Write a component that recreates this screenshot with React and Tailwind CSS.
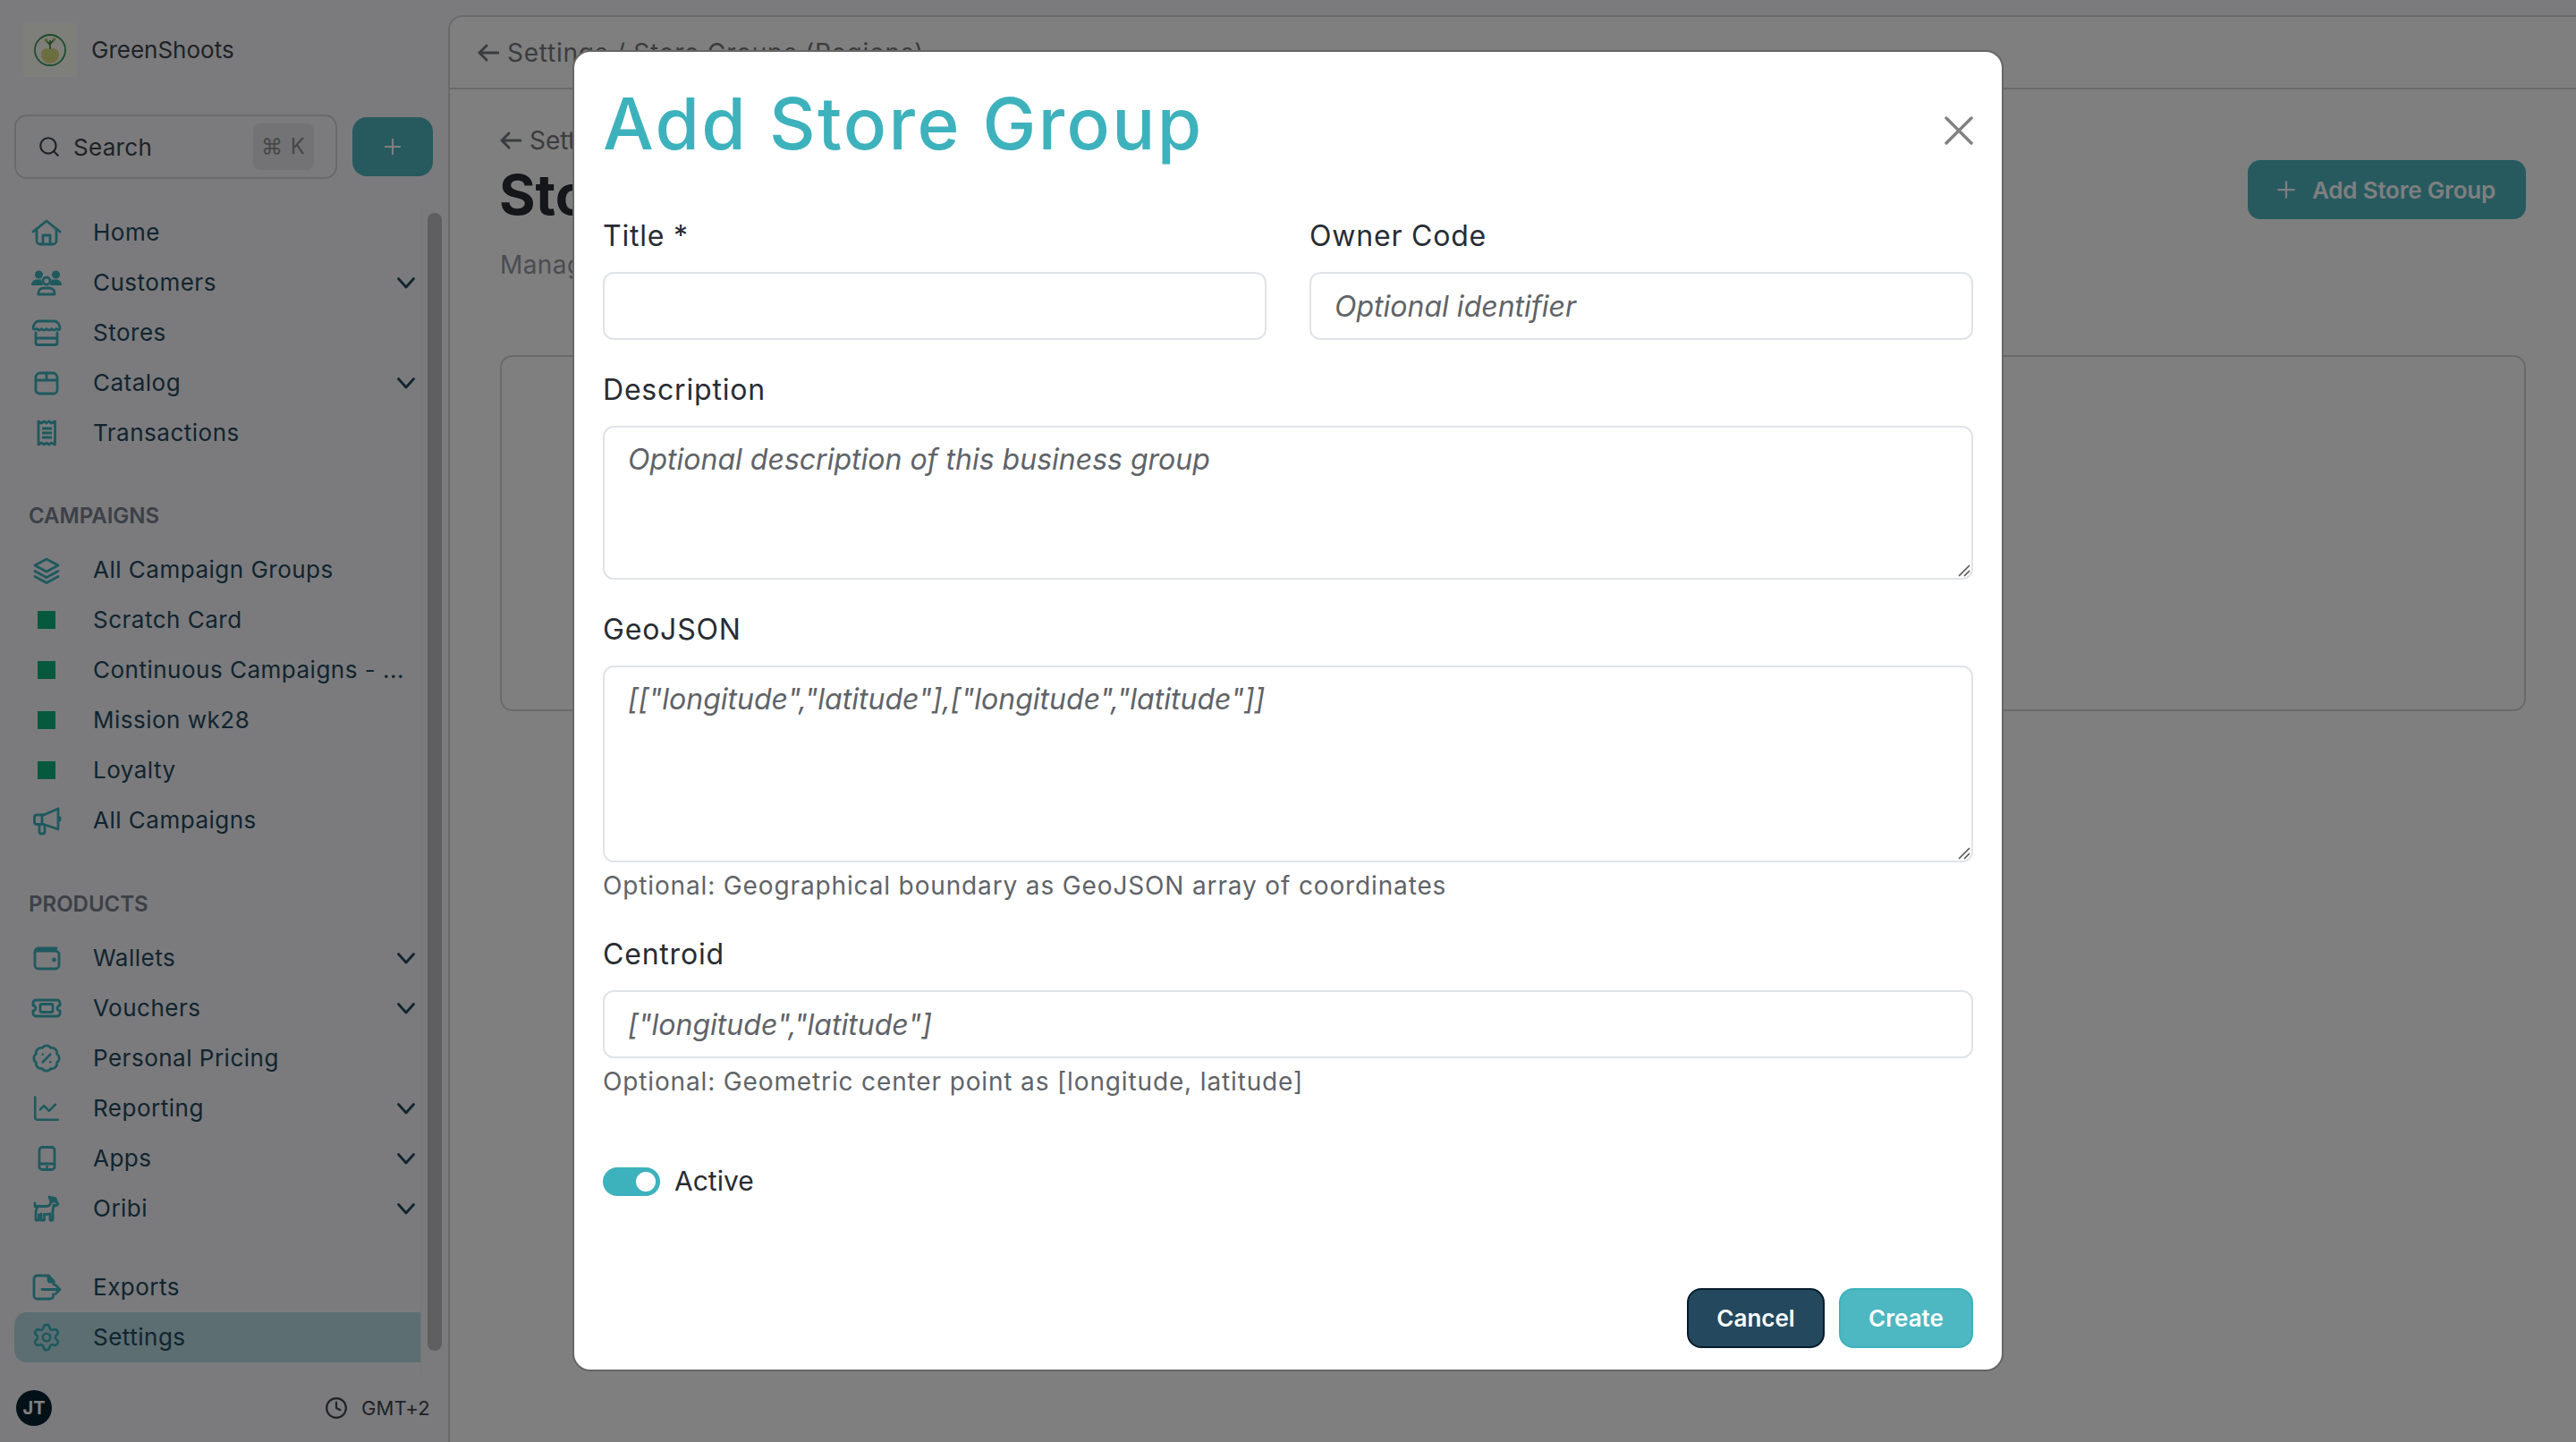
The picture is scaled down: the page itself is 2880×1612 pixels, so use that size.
import React from 'react'
import { BadgePercent, ChartLine, Clock, Search, Settings, Plus } from 'lucide-react'

const icon = 'h-[36px] w-[36px] shrink-0 fill-none stroke-[#3db2bd] stroke-[2.8]'

const HomeIcon = () => (
  <svg viewBox="0 0 36 36" className={icon} strokeLinecap="round" strokeLinejoin="round">
    <path d="M3 17 18 5l15 12" />
    <path d="M7 14v13a4 4 0 0 0 4 4h14a4 4 0 0 0 4-4V14" />
    <path d="M14 31V21h8v10" />
  </svg>
)

const CustomersIcon = () => (
  <svg viewBox="0 0 36 36" className={icon}>
    <circle cx="9.5" cy="9" r="4.5" className="fill-[#3db2bd] stroke-none" />
    <circle cx="28.5" cy="9" r="4.5" className="fill-[#3db2bd] stroke-none" />
    <path d="M1 21c0-4 3-6.500 6-6.500h5c.5 2 1.200 4.500 2 6.500zM35 21c0-4-3-6.500-6-6.500h-5c-.5 2-1.200 4.500-2 6.500z" className="fill-[#3db2bd] stroke-none" />
    <circle cx="18" cy="16" r="4" />
    <path d="M9 31v-2c0-3 3-5 6-5h6c3 0 6 2 6 5v2z" strokeLinejoin="round" />
  </svg>
)

const StoreIcon = () => (
  <svg viewBox="0 0 36 36" className={icon} strokeLinecap="round" strokeLinejoin="round">
    <path d="M9 5h18c3 0 6 4 6 8 0 2-3 2-4 .5-1.500 2-4 2-5.500 0-1.500 2-4 2-5.500 0-1.500 2-4 2-5.500 0-1.500 2-4 2-5 0C3 14.500 3 14 3 13c0-4 3-8 6-8z" />
    <path d="M6 18v11a2.500 2.500 0 0 0 2.500 2.500h19A2.500 2.500 0 0 0 30 29V18M6 24h24" />
  </svg>
)

const CatalogIcon = () => (
  <svg viewBox="0 0 36 36" className={icon} strokeLinecap="round" strokeLinejoin="round">
    <path d="M11 7h14a5 5 0 0 1 5 5v14a4 4 0 0 1-4 4H10a4 4 0 0 1-4-4V12a5 5 0 0 1 5-5z" />
    <path d="M6 15h24M18 7v8" />
  </svg>
)

const ReceiptIcon = () => (
  <svg viewBox="0 0 36 36" className={icon} strokeLinejoin="round">
    <path d="M9 5v26l3.500-2 3 2 2.500-2 2.500 2 3-2 4 2V5l-4 2-3-2-2.500 2L15.500 5l-3 2z" />
    <path d="M13 13h11M13 18h11M13 23h11" />
  </svg>
)

const LayersIcon = () => (
  <svg viewBox="0 0 36 36" className={icon} strokeLinecap="round" strokeLinejoin="round">
    <path d="M18 6 31 13l-13 7-13-7z" />
    <path d="m5 19.500 13 7 13-7M5 25.500l13 7 13-7" />
  </svg>
)

const MegaphoneIcon = () => (
  <svg viewBox="0 0 36 36" className={icon} strokeLinecap="round" strokeLinejoin="round">
    <path d="M31 5 15 12H7a2.500 2.500 0 0 0-2.500 2.500V20A2.500 2.500 0 0 0 7 22.500h8L31 28z" />
    <path d="M13 12v10.500M10 23v8a2 2 0 0 0 2 2h2a2 2 0 0 0 2-2v-7.500M33 15v3" />
  </svg>
)

const WalletIcon = () => (
  <svg viewBox="0 0 36 36" className={icon} strokeLinecap="round" strokeLinejoin="round">
    <path d="M5 11a4 4 0 0 1 4-4h20M5 11v15a4 4 0 0 0 4 4h19a4 4 0 0 0 4-4V14a4 4 0 0 0-4-4H6" />
    <circle cx="26.500" cy="20" r="1" />
  </svg>
)

const TicketIcon = () => (
  <svg viewBox="0 0 36 36" className={icon} strokeLinejoin="round">
    <path d="M6 9h24a3 3 0 0 1 3 3v3a3 3 0 0 0 0 6v3a3 3 0 0 1-3 3H6a3 3 0 0 1-3-3v-3a3 3 0 0 0 0-6v-3a3 3 0 0 1 3-3z" />
    <rect x="11" y="13.500" width="14" height="9" rx="1.500" />
  </svg>
)

const PhoneIcon = () => (
  <svg viewBox="0 0 36 36" className={icon} strokeLinecap="round">
    <rect x="10" y="5.500" width="17" height="25" rx="3" />
    <path d="M10 24h17M18.500 27.500h.2" />
  </svg>
)

const OribiIcon = () => (
  <svg viewBox="0 0 36 36" className={icon} strokeLinecap="round" strokeLinejoin="round">
    <path d="M5 12v3.500h13c3 0 4.500-2 5-5l.5-2.500h3.500l4 5-3 2-2-1-1 6.500V31h-3v-7M8 16c-1 2-2 4-2 6v9M6 31h3.500v-6M12 24v7h3.500v-6.500c2 0 4 0 6-.5" />
    <path d="M21 5l7 1.500 1 3.500-6 0z" className="fill-[#3db2bd]" />
  </svg>
)

const ExportIcon = () => (
  <svg viewBox="0 0 36 36" className={icon} strokeLinecap="round" strokeLinejoin="round">
    <path d="M26 15v-4l-6-6H7.500A3.500 3.500 0 0 0 4 8.500v19A3.500 3.500 0 0 0 7.500 31H22a3.500 3.500 0 0 0 3.500-3.500V26" />
    <path d="M20 5v5a2 2 0 0 0 2 2h4z" className="fill-[#3db2bd]" />
    <path d="M13 20.500h20M28 15.500l5 5-5 5" />
  </svg>
)

const ChartIcon = () => <ChartLine size={34} strokeWidth={1.8} className="ml-[1px] mr-[1px] text-[#3db2bd]" />
const PercentIcon = () => <BadgePercent size={34} strokeWidth={1.9} className="ml-[1px] mr-[1px] text-[#3db2bd]" />
const GearIcon = () => <Settings size={34} strokeWidth={1.9} className="ml-[1px] mr-[1px] text-[#3db2bd]" />

const Swatch = () => (
  <span className="flex h-[36px] w-[36px] shrink-0 items-center justify-center">
    <span className="h-[20px] w-[20px] bg-[#0cb378]" />
  </span>
)

const Chevron = () => (
  <svg viewBox="0 0 20 13" className="absolute left-[428px] top-[22px] h-[13px] w-[20px] fill-none stroke-[#24495e] stroke-[2.8]" strokeLinecap="round" strokeLinejoin="round">
    <path d="M1.500 1.500 10 11l8.500-9.500" />
  </svg>
)

const BackArrow = ({ className }) => (
  <svg viewBox="0 0 24 20" className={`h-[20px] w-[24px] shrink-0 fill-none stroke-[3] ${className}`} strokeLinecap="round" strokeLinejoin="round">
    <path d="M10 2 2 10l8 8M2 10h21" />
  </svg>
)

function NavRow({ icon: Icon, label, chevron, active }) {
  return (
    <div className={`relative flex h-[56px] items-center gap-[34px] rounded-l-[14px] pl-[18px] ${active ? 'bg-[#b8dce2]' : ''}`}>
      <Icon />
      <span className="truncate pb-[2px] text-[26px] tracking-[0.5px] text-[#24495e]">{label}</span>
      {chevron && <Chevron />}
    </div>
  )
}

const SectionLabel = ({ children, className }) => (
  <div className={`mb-[16px] flex h-[32px] items-center pl-[16px] text-[24px] font-semibold text-[#78808f] ${className}`}>
    {children}
  </div>
)

function Sidebar() {
  return (
    <aside className="flex w-[501px] shrink-0 flex-col">
      <div className="flex h-[128px] shrink-0 items-start pl-[26px] pt-[26px]">
        <div className="flex h-[60px] w-[60px] items-center justify-center bg-[#fdfdf6]">
          <svg viewBox="0 0 36 36" className="h-[36px] w-[36px]">
            <circle cx="18" cy="18" r="17" fill="none" stroke="#3a9a5a" strokeWidth="1.800" />
            <path d="M18 17c-5-2-10 0-10 6 0 6 5 10 10 10s10-4 10-10c0-6-5-8-10-6z" fill="#d8dc80" />
            <path d="M18 17V7M18 12l-4-4M18 11l4-4" stroke="#4e8a3e" strokeWidth="1.800" fill="none" />
            <circle cx="13.500" cy="7" r="2" fill="#b8c860" />
            <circle cx="22.500" cy="6" r="2" fill="#b8c860" />
          </svg>
        </div>
        <span className="ml-[16px] mt-[12px] text-[26px] leading-[36px] text-[#3e444c]">GreenShoots</span>
      </div>

      <div className="flex h-[104px] shrink-0 items-start pl-[16px] pr-[17px]">
        <div className="flex h-[72px] w-[361px] items-center rounded-[14px] border-2 border-[#d4d4d8] pl-[24px] pr-[24px]">
          <Search size={26} strokeWidth={2} className="shrink-0 text-[#3e444c]" />
          <span className="ml-[14px] flex-1 text-[26px] tracking-[0.3px] text-[#3e444c]">Search</span>
          <span className="flex h-[52px] w-[68px] items-center justify-center rounded-[8px] bg-[#e6e6ea] text-[24px] tracking-[1px] text-[#8b8f96]">⌘ K</span>
        </div>
        <button className="ml-[17px] mt-[3px] flex h-[66px] w-[90px] items-center justify-center rounded-[16px] bg-[#4cb4be] text-white">
          <Plus size={28} strokeWidth={1.8} />
        </button>
      </div>

      <div className="flex min-h-0 flex-1">
        <nav className="ml-[16px] w-[454px] overflow-hidden">
          <NavRow icon={HomeIcon} label="Home" />
          <NavRow icon={CustomersIcon} label="Customers" chevron />
          <NavRow icon={StoreIcon} label="Stores" />
          <NavRow icon={CatalogIcon} label="Catalog" chevron />
          <NavRow icon={ReceiptIcon} label="Transactions" />

          <SectionLabel className="mt-[49px]">CAMPAIGNS</SectionLabel>
          <NavRow icon={LayersIcon} label="All Campaign Groups" />
          <NavRow icon={Swatch} label="Scratch Card" />
          <NavRow icon={Swatch} label="Continuous Campaigns - ..." />
          <NavRow icon={Swatch} label="Mission wk28" />
          <NavRow icon={Swatch} label="Loyalty" />
          <NavRow icon={MegaphoneIcon} label="All Campaigns" />

          <SectionLabel className="mt-[50px]">PRODUCTS</SectionLabel>
          <NavRow icon={WalletIcon} label="Wallets" chevron />
          <NavRow icon={TicketIcon} label="Vouchers" chevron />
          <NavRow icon={PercentIcon} label="Personal Pricing" />
          <NavRow icon={ChartIcon} label="Reporting" chevron />
          <NavRow icon={PhoneIcon} label="Apps" chevron />
          <NavRow icon={OribiIcon} label="Oribi" chevron />

          <div className="h-[32px]" />
          <NavRow icon={ExportIcon} label="Exports" />
          <NavRow icon={GearIcon} label="Settings" active />
        </nav>
        <div className="w-[29px] border-l-2 border-[#f0f0f2] pl-[6px] pt-[6px]">
          <div className="h-[1272px] w-[16px] rounded-full bg-[#bebebe]" />
        </div>
      </div>

      <div className="flex h-[76px] shrink-0 items-center justify-between pl-[18px] pr-[20px]">
        <span className="flex h-[40px] w-[40px] items-center justify-center rounded-full bg-[#04202e] text-[20px] font-bold text-white">JT</span>
        <span className="flex items-center gap-[15px] text-[22px] tracking-[0.2px] text-[#3e444c]">
          <Clock size={26} strokeWidth={2} />
          GMT+2
        </span>
      </div>
    </aside>
  )
}

function Page() {
  return (
    <main className="mt-[17px] flex min-w-0 flex-1 flex-col rounded-tl-[16px] border-l-2 border-t-2 border-[#d4d4d8] bg-white">
      <header className="flex h-[81px] shrink-0 items-center gap-[9px] border-b-2 border-[#d4d4d8] pl-[31px] text-[28px] tracking-[0.75px] text-[#74787f]">
        <BackArrow className="stroke-[#74787f]" />
        Settings / Store Groups (Regions)
      </header>
      <div className="relative flex-1 pl-[56px] pr-[56px]">
        <div className="mt-[36px] flex items-center gap-[9px] text-[28px] text-[#74787f]">
          <BackArrow className="stroke-[#74787f]" />
          Settings
        </div>
        <div className="flex items-start justify-between">
          <h1 className="-ml-[1px] mt-[4px] text-[62px] font-bold leading-[72px] text-[#282c33]">Store Groups (Regions)</h1>
          <button className="mt-[1px] flex h-[66px] w-[311px] items-center justify-center gap-[14px] rounded-[14px] bg-[#4cb4be] pr-[6px] text-[26px] font-semibold tracking-[-0.2px] text-white">
            <Plus size={30} strokeWidth={1.8} />
            Add Store Group
          </button>
        </div>
        <p className="mt-[21px] text-[28px] tracking-[0.4px] text-[#9499a4]">Manage store groups and regions</p>
        <div className="mt-[80px] h-[398px] rounded-[14px] border-2 border-[#d4d4d8]" />
      </div>
    </main>
  )
}

const inputCls = "w-full rounded-[12px] border-2 border-[#e0e3e8] bg-white px-[26px] text-[32px] text-[#282c33] outline-none placeholder:italic placeholder:text-[#5f6368]"
const labelCls = 'mb-[16px] block text-[32px] leading-[48px] tracking-[0.8px] text-[#282c33]'
const helpCls = 'mt-[6px] text-[28px] leading-[40px] tracking-[0.86px] text-[#5f6368]'

function ResizeGrip() {
  return (
    <svg viewBox="0 0 14 14" className="pointer-events-none absolute bottom-[3px] right-[3px] h-[14px] w-[14px] fill-none stroke-[#555555] stroke-[1.6]">
      <path d="M1 13 13 1M7 13l6-6" />
    </svg>
  )
}

function AddStoreGroupModal() {
  return (
    <div className="absolute inset-0 flex items-start justify-center bg-black/50 pt-[56px]">
      <div className="flex h-[1477px] w-[1600px] flex-col rounded-[20px] border-2 border-[#666666] bg-white px-[32px] pb-[24px]">
        <div className="mt-[32px] flex items-start justify-between">
          <h2 className="text-[80px] font-medium leading-[96px] tracking-[2.4px] text-[#3db2bd]">Add Store Group</h2>
          <button className="mt-[40px] text-[#828282]">
            <svg viewBox="0 0 32 32" className="h-[32px] w-[32px] fill-none stroke-current stroke-[3.5]" strokeLinecap="round">
              <path d="M2 2l28 28M30 2 2 30" />
            </svg>
          </button>
        </div>

        <div className="mt-[54px] grid grid-cols-2 gap-[48px]">
          <div>
            <label className={labelCls}>Title *</label>
            <input className={`${inputCls} h-[76px]`} />
          </div>
          <div>
            <label className={labelCls}>Owner Code</label>
            <input className={`${inputCls} h-[76px]`} placeholder="Optional identifier" />
          </div>
        </div>

        <label className={`${labelCls} mt-[32px]`}>Description</label>
        <div className="relative">
          <textarea className={`${inputCls} block h-[172px] resize-none py-[14px] leading-[44px]`} placeholder="Optional description of this business group" />
          <ResizeGrip />
        </div>

        <label className={`${labelCls} mt-[32px]`}>GeoJSON</label>
        <div className="relative">
          <textarea className={`${inputCls} block h-[220px] resize-none py-[14px] leading-[44px]`} placeholder={'[["longitude","latitude"],["longitude","latitude"]]'} />
          <ResizeGrip />
        </div>
        <p className={helpCls}>Optional: Geographical boundary as GeoJSON array of coordinates</p>

        <label className={`${labelCls} mt-[33px]`}>Centroid</label>
        <input className={`${inputCls} h-[76px]`} placeholder={'["longitude","latitude"]'} />
        <p className={helpCls}>Optional: Geometric center point as [longitude, latitude]</p>

        <div className="mt-[69px] flex items-center gap-[16px]">
          <span className="relative h-[32px] w-[64px] rounded-full bg-[#3db2bd]">
            <span className="absolute right-[5px] top-[5px] h-[22px] w-[22px] rounded-full bg-white" />
          </span>
          <span className="text-[30px] text-[#282c33]">Active</span>
        </div>

        <div className="mt-auto flex justify-end gap-[16px]">
          <button className="h-[67px] w-[154px] rounded-[16px] border-2 border-[#071c2b] bg-[#24495e] text-[26px] font-semibold text-white">Cancel</button>
          <button className="h-[67px] w-[150px] rounded-[16px] border-2 border-[#3db2bd] bg-[#4db7c2] text-[26px] font-semibold text-white">Create</button>
        </div>
      </div>
    </div>
  )
}

export default function App() {
  return (
    <div className="relative flex h-[1612px] w-[2880px] overflow-hidden bg-[#f6f6fa] font-['Inter',sans-serif]">
      <Sidebar />
      <Page />
      <AddStoreGroupModal />
    </div>
  )
}
